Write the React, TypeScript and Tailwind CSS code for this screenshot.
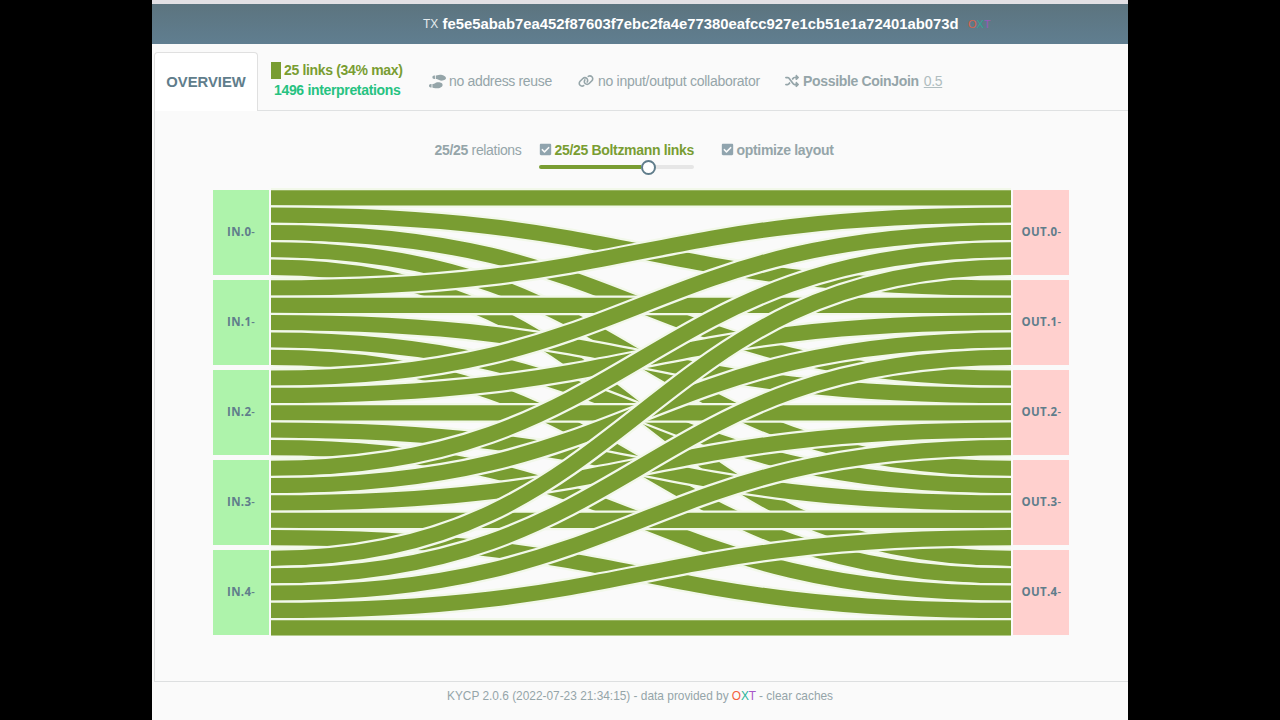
import React from "react";
import { FaCheckSquare } from "react-icons/fa";
import { FaShoePrints, FaLink, FaShuffle } from "react-icons/fa6";

const SLOTS = [0, 1, 2, 3, 4];
const PITCH = 90.15;
const STEP = 17.35;
const yOf = (node: number, slot: number) => 9.85 + node * PITCH + slot * STEP;

function Links() {
  return (
    <svg className="block h-[448px] w-[740px]" viewBox="0 0 740 448">
      {SLOTS.map((i) =>
        SLOTS.map((j) => {
          const a = yOf(i, j);
          const b = yOf(j, i);
          const d = `M0 ${a} C370 ${a} 370 ${b} 740 ${b}`;
          return (
            <g key={`${i}-${j}`} fill="none">
              <path d={d} stroke="#f2f8ea" strokeWidth={19.8} />
              <path d={d} stroke="#799d32" strokeWidth={15.3} />
            </g>
          );
        })
      )}
    </svg>
  );
}

function Nodes({ label, box }: { label: string; box: string }) {
  return (
    <div className="flex flex-col gap-[4.95px] pt-[1.7px]">
      {SLOTS.map((n) => (
        <div key={n} className={`flex h-[85.2px] items-center justify-center pb-px ${box}`}>
          <span className="text-[11.5px] font-bold tracking-[0.3px] text-[#607d8b]">{label}.{n}</span>
          <span className="text-[11px] font-semibold text-[#607d8b]">-</span>
        </div>
      ))}
    </div>
  );
}

function Oxt() {
  return (
    <>
      <span className="text-[#f4603e]">O</span>
      <span className="text-[#2ab39b]">X</span>
      <span className="text-[#a855c8]">T</span>
    </>
  );
}

export default function App() {
  return (
    <div className="flex h-[720px] w-[1280px] justify-center overflow-hidden bg-black font-['Liberation_Sans',Arial,sans-serif] text-[14px] leading-5 tracking-[-0.33px] text-[#95a5a9] whitespace-nowrap">
      <div className="flex w-[976px] flex-col bg-[#fafafa]">
        <div className="h-1 bg-[#e2e0e4]" />
        <header className="flex h-10 items-center bg-linear-to-b from-[#5c747f] to-[#607e90] pl-[271px] tracking-normal text-white">
          <span className="w-[19.5px] text-[12px] text-[#e4eaed]">TX</span>
          <span className="w-[525.5px] text-[14.83px] font-bold">fe5e5abab7ea452f87603f7ebc2fa4e77380eafcc927e1cb51e1a72401ab073d</span>
          <span className="flex text-[11px] opacity-80"><Oxt /></span>
        </header>
        <nav className="flex h-[67px] pl-0.5 pt-2">
          <div className="flex w-[104px] items-center justify-center rounded-t border border-b-0 border-[#e0e0e0] bg-white text-[14.8px] font-bold tracking-normal text-[#607d8b]">OVERVIEW</div>
          <div className="flex flex-1 border-b border-[#dfe1e2]">
            <div className="w-[171px] pl-[13px] pt-2 font-bold">
              <div className="flex h-5 items-center text-[#799d32]"><span className="mr-[3px] h-[17px] w-[10px] bg-[#799d32]" />25 links (34% max)</div>
              <div className="h-5 pl-[3px] text-[#26c281]">1496 interpretations</div>
            </div>
            <div className="flex h-[58px] w-[149px] items-center gap-[3px]"><FaShoePrints size={17} />no address reuse</div>
            <div className="flex h-[58px] w-[207px] items-center gap-1 tracking-[-0.28px]"><FaLink size={16} />no input/output collaborator</div>
            <div className="flex h-[58px] items-center gap-1 font-bold"><FaShuffle size={14} />Possible CoinJoin <span className="ml-px text-[#b0bdc0] font-normal underline">0.5</span></div>
          </div>
        </nav>
        <main className="ml-0.5 h-[571px] border-b border-l border-[#dddfe0]">
          <div className="flex h-[77px] items-start pl-[279.6px] pt-[29px]">
            <div className="w-[104px]"><b>25/25</b> relations</div>
            <div className="w-[182px] font-bold text-[#799d32]">
              <div className="flex items-center gap-[3px]"><FaCheckSquare size={13} className="-mt-0.5 text-[#90a4ae]" />25/25 Boltzmann links</div>
              <div className="-mt-[9px] flex h-[16px] w-[155px] items-center">
                <div className="mt-4 h-1 w-[102px] rounded-l bg-[#799d32]" />
                <div className="mt-4 h-[15px] w-[15px] rounded-full border-2 border-[#607d8b] bg-white" />
                <div className="mt-4 h-[4px] flex-1 rounded-r bg-[#e6e6e6]" />
              </div>
            </div>
            <div className="flex items-center gap-[3px] font-bold"><FaCheckSquare size={13} className="-mt-0.5 text-[#90a4ae]" />optimize layout</div>
          </div>
          <div className="flex gap-0.5 pl-[57.6px] font-['Open_Sans',sans-serif]">
            <Nodes label="IN" box="w-[56.4px] bg-[#aef3ab]" />
            <Links />
            <Nodes label="OUT" box="w-[56.3px] bg-[#ffd0ce]" />
          </div>
        </main>
        <footer className="flex pl-[295px] pt-1 text-[11.88px] tracking-normal">
          <span className="mr-[3px]">KYCP 2.0.6 (2022-07-23 21:34:15) - data provided by</span><Oxt /><span className="ml-[3px]">- clear caches</span>
        </footer>
      </div>
    </div>
  );
}
